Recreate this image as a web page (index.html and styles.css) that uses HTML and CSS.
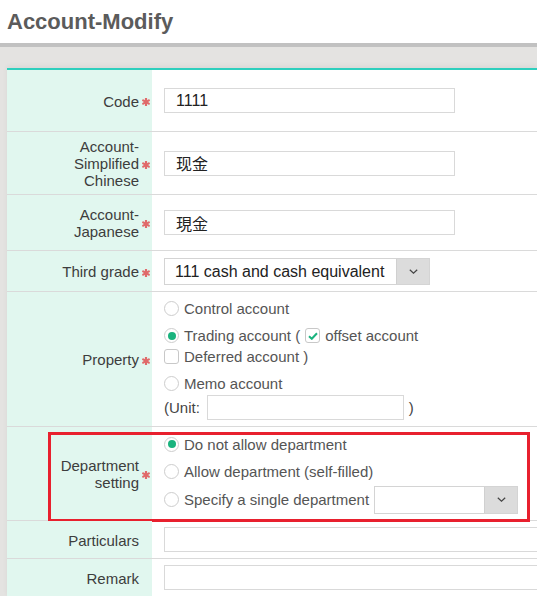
FILE: index.html
```html
<!DOCTYPE html>
<html lang="en">
<head>
<meta charset="utf-8">
<title>Account-Modify</title>
<link rel="stylesheet" href="styles.css">
</head>
<body>
<header class="page-head"><h1 class="title">Account-Modify</h1></header>
<div class="head-bar"></div>
<main class="page">
  <div class="card">
    <div class="row row-code">
      <div class="label"><span class="label-text">Code</span><span class="req"><svg viewBox="0 0 8 8" width="8" height="8"><g stroke="#e06a6a" stroke-width="2.2" stroke-linecap="round"><line x1="4" y1="0.8" x2="4" y2="7.2"/><line x1="1.2" y1="2.4" x2="6.8" y2="5.6"/><line x1="1.2" y1="5.6" x2="6.8" y2="2.4"/></g></svg></span></div>
      <div class="field"><input class="text-input" type="text" value="1111"></div>
    </div>
    <div class="row row-sc">
      <div class="label"><span class="label-text">Account-Simplified Chinese</span><span class="req"><svg viewBox="0 0 8 8" width="8" height="8"><g stroke="#e06a6a" stroke-width="2.2" stroke-linecap="round"><line x1="4" y1="0.8" x2="4" y2="7.2"/><line x1="1.2" y1="2.4" x2="6.8" y2="5.6"/><line x1="1.2" y1="5.6" x2="6.8" y2="2.4"/></g></svg></span></div>
      <div class="field"><input class="text-input cjk-sc" type="text" value="现金" lang="zh-CN"></div>
    </div>
    <div class="row row-jp">
      <div class="label"><span class="label-text">Account-Japanese</span><span class="req"><svg viewBox="0 0 8 8" width="8" height="8"><g stroke="#e06a6a" stroke-width="2.2" stroke-linecap="round"><line x1="4" y1="0.8" x2="4" y2="7.2"/><line x1="1.2" y1="2.4" x2="6.8" y2="5.6"/><line x1="1.2" y1="5.6" x2="6.8" y2="2.4"/></g></svg></span></div>
      <div class="field"><input class="text-input cjk-jp" type="text" value="現金" lang="ja"></div>
    </div>
    <div class="row row-grade">
      <div class="label"><span class="label-text">Third grade</span><span class="req"><svg viewBox="0 0 8 8" width="8" height="8"><g stroke="#e06a6a" stroke-width="2.2" stroke-linecap="round"><line x1="4" y1="0.8" x2="4" y2="7.2"/><line x1="1.2" y1="2.4" x2="6.8" y2="5.6"/><line x1="1.2" y1="5.6" x2="6.8" y2="2.4"/></g></svg></span></div>
      <div class="field">
        <div class="select select-grade">
          <span class="select-text">111 cash and cash equivalent</span>
          <span class="select-btn"><svg viewBox="0 0 9 5" width="9" height="5"><polyline points="0.8,0.8 4.5,4.2 8.2,0.8" fill="none" stroke="#444" stroke-width="1.2"/></svg></span>
        </div>
      </div>
    </div>
    <div class="row row-prop">
      <div class="label"><span class="label-text">Property</span><span class="req"><svg viewBox="0 0 8 8" width="8" height="8"><g stroke="#e06a6a" stroke-width="2.2" stroke-linecap="round"><line x1="4" y1="0.8" x2="4" y2="7.2"/><line x1="1.2" y1="2.4" x2="6.8" y2="5.6"/><line x1="1.2" y1="5.6" x2="6.8" y2="2.4"/></g></svg></span></div>
      <div class="field">
        <div class="opts">
          <div class="opt"><span class="radio"></span><span>Control account</span></div>
          <div class="opt"><span class="radio on"></span><span>Trading account (</span><span class="check on"><svg viewBox="0 0 10 8" width="10" height="8"><polyline points="1,4.2 3.8,6.8 9,1.2" fill="none" stroke="#1ab37e" stroke-width="2"/></svg></span><span>offset account</span></div>
          <div class="opt opt-tight"><span class="check"></span><span>Deferred account )</span></div>
          <div class="opt"><span class="radio"></span><span>Memo account</span></div>
          <div class="unit-line"><span>(Unit:</span><input class="text-input unit-input" type="text" value=""><span>)</span></div>
        </div>
      </div>
    </div>
    <div class="row row-dept">
      <div class="label"><span class="label-text">Department setting</span><span class="req"><svg viewBox="0 0 8 8" width="8" height="8"><g stroke="#e06a6a" stroke-width="2.2" stroke-linecap="round"><line x1="4" y1="0.8" x2="4" y2="7.2"/><line x1="1.2" y1="2.4" x2="6.8" y2="5.6"/><line x1="1.2" y1="5.6" x2="6.8" y2="2.4"/></g></svg></span></div>
      <div class="field">
        <div class="opts">
          <div class="opt"><span class="radio on"></span><span>Do not allow department</span></div>
          <div class="opt"><span class="radio"></span><span>Allow department (self-filled)</span></div>
          <div class="opt opt-select"><span class="radio"></span><span>Specify a single department</span>
            <div class="select select-dept">
              <span class="select-text"></span>
              <span class="select-btn"><svg viewBox="0 0 9 5" width="9" height="5"><polyline points="0.8,0.8 4.5,4.2 8.2,0.8" fill="none" stroke="#444" stroke-width="1.2"/></svg></span>
            </div>
          </div>
        </div>
      </div>
      <div class="highlight"></div>
    </div>
    <div class="row row-part">
      <div class="label"><span class="label-text">Particulars</span><span class="req req-empty"></span></div>
      <div class="field"><input class="text-input wide-input" type="text" value=""></div>
    </div>
    <div class="row row-remark">
      <div class="label"><span class="label-text">Remark</span><span class="req req-empty"></span></div>
      <div class="field"><input class="text-input wide-input" type="text" value=""></div>
    </div>
  </div>
</main>
</body>
</html>
```
FILE: styles.css
```css
html, body {
  margin: 0;
  padding: 0;
  overflow: hidden;
}
body {
  background: #e4e3e1;
  font-family: "Liberation Sans", Arial, sans-serif;
  width: 537px;
  height: 596px;
}
.page-head {
  background: #fff;
  height: 43px;
  box-sizing: border-box;
  padding: 9px 7px 0;
}
.title {
  margin: 0;
  font-size: 22px;
  line-height: 25px;
  font-weight: bold;
  color: #5b5b5b;
}
.head-bar {
  height: 4px;
  background: #c1c1c1;
}
.page {
  padding: 21px 0 0 7px;
}
.card {
  width: 530px;
  overflow: hidden;
  background: #fff;
  border-top: 2px solid #2ecfbd;
  box-shadow: 0 -2px 5px rgba(0, 0, 0, 0.05);
}
.row {
  display: flex;
  box-sizing: border-box;
  border-bottom: 1px solid #dadada;
  position: relative;
}
.row-code { height: 62px; }
.row-sc { height: 63px; }
.row-jp { height: 56px; }
.row-grade { height: 41px; }
.row-prop { height: 135px; }
.row-dept { height: 94px; }
.row-part { height: 38px; }
.row-remark { height: 38px; }

.label {
  width: 145px;
  flex: none;
  box-sizing: border-box;
  background: #e1f7ef;
  display: flex;
  justify-content: flex-end;
  align-items: center;
  padding-right: 2px;
  padding-top: 1px;
  font-size: 15px;
  color: #3d3d3d;
}
.label-text {
  max-width: 90px;
  text-align: right;
}
.req {
  width: 8px;
  height: 8px;
  margin-left: 3px;
  margin-top: 2px;
  display: flex;
  flex: none;
}
.field {
  flex: 1;
  min-width: 0;
  overflow: hidden;
  padding-left: 12px;
  display: flex;
  align-items: center;
}
.text-input {
  width: 291px;
  height: 25px;
  flex: none;
  box-sizing: border-box;
  margin: 0;
  border: 1px solid #d9d9d9;
  padding: 0 0 0 11px;
  font-family: "Liberation Sans", Arial, sans-serif;
  font-size: 16px;
  color: #222;
  background: #fff;
  outline: none;
}
.cjk-sc {
  font-family: "Liberation Sans", "Noto Sans CJK SC", sans-serif;
}
.cjk-jp {
  font-family: "Liberation Sans", "Noto Sans CJK JP", sans-serif;
}
.unit-input {
  width: 197px;
}
.wide-input {
  width: 420px;
}
.select {
  display: flex;
  box-sizing: border-box;
  border: 1px solid #d4d4d4;
  background: #fff;
}
.select-grade {
  width: 266px;
  height: 27px;
}
.select-dept {
  width: 144px;
  height: 28px;
}
.select-text {
  flex: 1;
  padding-left: 10px;
  font-size: 16px;
  line-height: 25px;
  color: #222;
  white-space: nowrap;
}
.select-btn {
  width: 32px;
  flex: none;
  background: #dcdcdc;
  border-left: 1px solid #d0d0d0;
  display: flex;
  align-items: center;
  justify-content: center;
}
.opts {
  display: flex;
  flex-direction: column;
}
.opt {
  display: flex;
  align-items: center;
  gap: 5px;
  height: 21px;
  font-size: 15px;
  color: #555;
  white-space: nowrap;
}
.opt + .opt {
  margin-top: 6px;
}
.opt + .opt-tight {
  margin-top: 0;
}
.opt + .opt-select {
  margin-top: 4px;
  height: 28px;
}
.unit-line {
  margin-top: 1px;
  display: flex;
  align-items: center;
  gap: 5px;
  height: 25px;
  font-size: 15px;
  color: #444;
}
.unit-line .unit-input {
  margin-left: 2px;
}
.radio {
  width: 15px;
  height: 15px;
  box-sizing: border-box;
  border: 1px solid #cdcdcd;
  border-radius: 50%;
  background: #fff;
  display: flex;
  align-items: center;
  justify-content: center;
  flex: none;
}
.radio.on::after {
  content: "";
  width: 8px;
  height: 8px;
  border-radius: 50%;
  background: #1ab37e;
}
.check {
  width: 15px;
  height: 15px;
  box-sizing: border-box;
  border: 1px solid #c8c8c8;
  border-radius: 3px;
  background: #fff;
  display: flex;
  align-items: center;
  justify-content: center;
  flex: none;
}
.highlight {
  position: absolute;
  left: 41px;
  top: 5px;
  width: 482px;
  height: 90px;
  box-sizing: border-box;
  border: 3px solid #e8202e;
  pointer-events: none;
}
```
